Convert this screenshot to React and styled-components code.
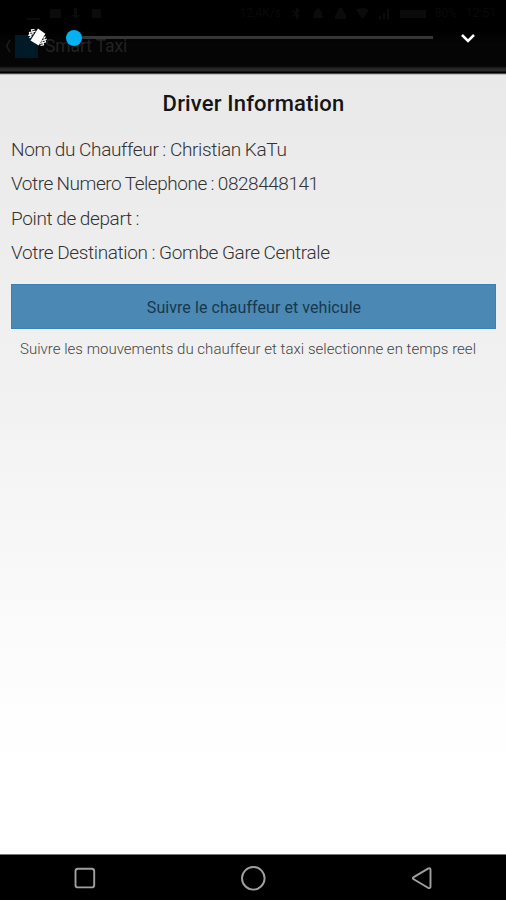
import React from "react";
import styled, { createGlobalStyle } from "styled-components";

const GlobalStyle = createGlobalStyle`
  * { box-sizing: border-box; }
  html, body { margin: 0; background: #000; }
  body { font-family: Roboto, sans-serif; overflow: hidden; }
  p, h1 { margin: 0; }
`;

const Screen = styled.div`
  width: 506px;
  height: 900px;
  display: flex;
  flex-direction: column;
`;

const Header = styled.header`
  position: relative;
  height: 75px;
  flex: none;
  background: linear-gradient(#000 0, #000 30px, #050505 44px, #050505 66px, #292929 69px, #292929 71px, #000 72px, #000 73px, #8c8c8c 74px, #f4f4f4 75px);
`;

const StatusBar = styled.div`
  height: 26px;
  display: flex;
  justify-content: space-between;
  align-items: center;
  padding: 0 10px 0 27px;
  color: #0a0a0a;
  font-size: 12px;
`;

const StatusGroup = styled.div`
  display: flex;
  align-items: center;
  gap: ${(p) => p.$gap}px;
`;

const ActionBar = styled.div`
  height: 40px;
  display: flex;
  align-items: center;
  padding-left: 5px;
  color: #222;
  font-size: 17.5px;
  letter-spacing: -0.1px;
`;

const AppIcon = styled.span`
  width: 23px;
  height: 23px;
  margin: 0 7px 0 3px;
  background: #001b27;
`;

const VolumePanel = styled.div`
  position: absolute;
  inset: 0;
  display: flex;
  align-items: flex-start;
  padding: 27px 27px 0 27px;
`;

const Slider = styled.div`
  display: flex;
  align-items: center;
  width: 367px;
  height: 21px;
  margin-left: 18px;
`;

const Thumb = styled.span`
  width: 16px;
  height: 16px;
  border-radius: 50%;
  background: #05b1f3;
`;

const Track = styled.span`
  flex: 1;
  height: 3px;
  background: #363636;
`;

const Chevron = styled.svg`
  margin: 2px 0 0 27px;
`;

const Content = styled.main`
  flex: 1;
  display: flex;
  flex-direction: column;
  padding: 0 10px 0 11px;
  background: linear-gradient(#e9e9e9, #ededed 20%, #f2f2f2 43%, #f8f8f8 62%, #fefefe 83%, #fff 90%);
`;

const Title = styled.h1`
  margin-top: 15px;
  line-height: 28px;
  font-size: 22px;
  font-weight: 500;
  color: #151515;
  text-align: center;
  white-space: nowrap;
  letter-spacing: ${(p) => p.$spacing}px;
`;

const Details = styled.div`
  height: 138px;
  margin-top: 15px;
  display: grid;
  grid-auto-rows: 34.3px;
`;

const Detail = styled.p`
  line-height: 34.3px;
  font-size: 19px;
  font-weight: 300;
  color: #333;
  white-space: nowrap;
  letter-spacing: ${(p) => p.$spacing}px;
  word-spacing: -0.4px;
`;

const TrackButton = styled.button`
  height: 45px;
  margin-top: 13px;
  padding: 2px 0 0 1px;
  border: 1px solid #3583b2;
  background: #4b88b3;
  color: #17384d;
  font: 400 16px Roboto, sans-serif;
  letter-spacing: ${(p) => p.$spacing}px;
`;

const Hint = styled.p`
  margin-top: 10px;
  padding-left: 9px;
  line-height: 20px;
  font-size: 15px;
  font-weight: 300;
  color: #444;
  white-space: nowrap;
  letter-spacing: ${(p) => p.$spacing}px;
`;

const NavBar = styled.nav`
  flex: none;
  height: 46px;
  display: grid;
  grid-template-columns: repeat(3, 1fr);
  align-items: center;
  justify-items: center;
  border-top: 1px solid #777;
  background: #000;
`;

const NavIcon = ({ children }) => (
  <svg width="28" height="28" viewBox="0 0 28 28" fill="none" stroke="#a0a0a0" strokeWidth="1.9" strokeLinejoin="round">
    {children}
  </svg>
);

const StatusIcon = ({ d, width = 13 }) => (
  <svg width={width} height="13" viewBox={`0 0 ${width} 13`} fill="#0b0b0b"><path d={d} /></svg>
);

export default function App() {
  return (
    <>
      <GlobalStyle />
      <Screen>
        <Header>
          <StatusBar>
            <StatusGroup $gap={8}>
              <StatusIcon d="M0 11h13v2H0z" />
              <StatusIcon d="M2 2h11v9H2z" />
              <StatusIcon d="M5 1h3v7h3l-4 4-5-4h3z" />
              <StatusIcon d="M2 2h9v9H2z" />
            </StatusGroup>
            <StatusGroup $gap={9}>
              <span>12,4K/s</span>
              <StatusIcon d="M6 0l4 4-3 2.500 3 2.500-4 4V8L3 10 2 9l3-2.500L2 4l1-1 3 2z" />
              <StatusIcon d="M2 9V5l4-4 4 4v4l2 2H1z" />
              <StatusIcon d="M1 12V9l4-8h3l4 8v3z" />
              <StatusIcon d="M0 3q6.500-4 13 0L6.500 12z" />
              <StatusIcon d="M1 12V9h2v3zM5 12V6h2v6zM9 12V2h2v10z" />
              <StatusIcon width={26} d="M0 3h26v8H0z" />
              <span>80%</span>
              <span>12:51</span>
            </StatusGroup>
          </StatusBar>
          <ActionBar>
            <svg width="7" height="14" viewBox="0 0 7 14" fill="none" stroke="#1c1c1c" strokeWidth="1.6"><path d="M5 1 1.5 7 5 13" /></svg>
            <AppIcon />
            Smart Taxi
          </ActionBar>
          <VolumePanel>
            <svg width="21" height="21" viewBox="0 0 21 21" stroke="#fff" fill="none">
              <path d="M11 1.500 18.300 6.800 11.700 18.500 3.500 13.500z" fill="#fff" stroke="none" />
              <path d="M1.300 8.500 3 7.500 2.500 5.500 5 5 4.500 2.800 7.500 2.500M2.500 11 4 9.500 3.800 7.500 6 6.800 6 4.800 8.500 4.200M19.700 12 18 13l.5 2-2.500.5.5 2.300-3 .5M18.500 9.500 17 11l.2 2-2.200.8.200 2-2.200.7" strokeWidth="1.200" />
            </svg>
            <Slider><Thumb /><Track /></Slider>
            <Chevron width="16" height="18" viewBox="0 0 16 18" fill="none" stroke="#fff" strokeWidth="2.500"><path d="m2 6 6 6 6-6" /></Chevron>
          </VolumePanel>
        </Header>
        <Content>
          <Title $spacing={0.17}>Driver Information</Title>
          <Details>
            <Detail $spacing={-0.34}>Nom du Chauffeur : Christian KaTu</Detail>
            <Detail $spacing={-0.46}>Votre Numero Telephone : 0828448141</Detail>
            <Detail $spacing={-0.35}>Point de depart :</Detail>
            <Detail $spacing={-0.36}>Votre Destination : Gombe Gare Centrale</Detail>
          </Details>
          <TrackButton $spacing={0.06}>Suivre le chauffeur et vehicule</TrackButton>
          <Hint $spacing={0.02}>Suivre les mouvements du chauffeur et taxi selectionne en temps reel</Hint>
        </Content>
        <NavBar>
          <NavIcon><rect x="5.500" y="4.700" width="18.700" height="18.700" rx="2.500" /></NavIcon>
          <NavIcon><circle cx="14.300" cy="14.300" r="11.300" /></NavIcon>
          <NavIcon><path d="M5.300 13.400Q4.300 14.200 5.300 15L20 23.800Q22.500 24.700 22.500 22.700V5.700Q22.500 3.700 20 4.600Z" /></NavIcon>
        </NavBar>
      </Screen>
    </>
  );
}
